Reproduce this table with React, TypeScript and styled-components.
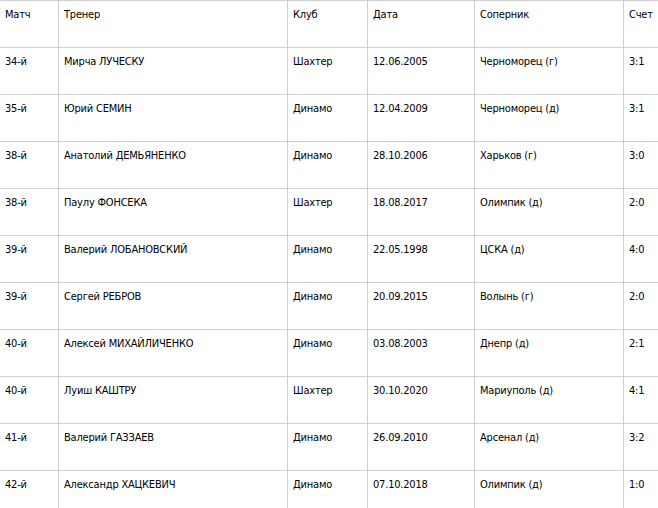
import React from "react";
import styled, { createGlobalStyle } from "styled-components";

type Match = {
  match: string;
  coach: string;
  club: string;
  date: string;
  rival: string;
  score: string;
};

const matches: Match[] = [
  { match: "34-й", coach: "Мирча ЛУЧЕСКУ", club: "Шахтер", date: "12.06.2005", rival: "Черноморец (г)", score: "3:1" },
  { match: "35-й", coach: "Юрий СЕМИН", club: "Динамо", date: "12.04.2009", rival: "Черноморец (д)", score: "3:1" },
  { match: "38-й", coach: "Анатолий ДЕМЬЯНЕНКО", club: "Динамо", date: "28.10.2006", rival: "Харьков (г)", score: "3:0" },
  { match: "38-й", coach: "Паулу ФОНСЕКА", club: "Шахтер", date: "18.08.2017", rival: "Олимпик (д)", score: "2:0" },
  { match: "39-й", coach: "Валерий ЛОБАНОВСКИЙ", club: "Динамо", date: "22.05.1998", rival: "ЦСКА (д)", score: "4:0" },
  { match: "39-й", coach: "Сергей РЕБРОВ", club: "Динамо", date: "20.09.2015", rival: "Волынь (г)", score: "2:0" },
  { match: "40-й", coach: "Алексей МИХАЙЛИЧЕНКО", club: "Динамо", date: "03.08.2003", rival: "Днепр (д)", score: "2:1" },
  { match: "40-й", coach: "Луиш КАШТРУ", club: "Шахтер", date: "30.10.2020", rival: "Мариуполь (д)", score: "4:1" },
  { match: "41-й", coach: "Валерий ГАЗЗАЕВ", club: "Динамо", date: "26.09.2010", rival: "Арсенал (д)", score: "3:2" },
  { match: "42-й", coach: "Александр ХАЦКЕВИЧ", club: "Динамо", date: "07.10.2018", rival: "Олимпик (д)", score: "1:0" },
];

const GlobalStyle = createGlobalStyle`
  html, body {
    margin: 0;
    padding: 0;
    overflow: hidden;
    background: #fff;
  }
`;

const Table = styled.div`
  width: 690px;
  border-top: 1px solid #cfcfcf;
  font-family: "DejaVu Sans Condensed", "DejaVu Sans", Tahoma, sans-serif;
  font-size: 11px;
  line-height: 13px;
  letter-spacing: -0.2px;
  color: #000;
`;

const Row = styled.div`
  display: grid;
  grid-template-columns: 59px 229px 80px 107px 149px 66px;
  height: 47px;
  box-sizing: border-box;
  border-bottom: 1px solid #cfcfcf;
`;

const Cell = styled.div`
  padding: 7px 5px 0 5px;
  border-right: 1px solid #cfcfcf;
  white-space: nowrap;
  overflow: hidden;
`;

const headers = ["Матч", "Тренер", "Клуб", "Дата", "Соперник", "Счет"];

export default function App() {
  return (
    <>
      <GlobalStyle />
      <Table>
        <Row>
          {headers.map((h) => (
            <Cell key={h}>{h}</Cell>
          ))}
        </Row>
        {matches.map((m, i) => (
          <Row key={i}>
            <Cell>{m.match}</Cell>
            <Cell>{m.coach}</Cell>
            <Cell>{m.club}</Cell>
            <Cell>{m.date}</Cell>
            <Cell>{m.rival}</Cell>
            <Cell>{m.score}</Cell>
          </Row>
        ))}
      </Table>
    </>
  );
}
